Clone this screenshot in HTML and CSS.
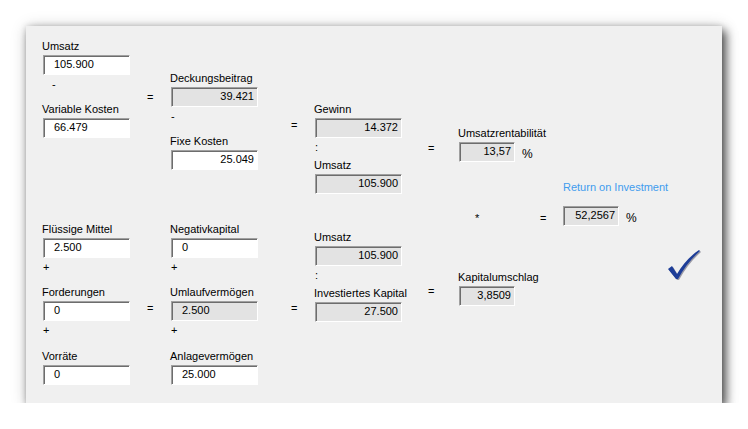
FILE: index.html
```html
<!DOCTYPE html>
<html lang="de">
<head>
<meta charset="utf-8">
<title>Return on Investment</title>
<link rel="stylesheet" href="styles.css">
</head>
<body>
<div class="panel">
  <div class="col col-a">
    <div class="field top-a"><div class="lbl">Umsatz</div><div class="box">105.900</div></div>
    <div class="sep"><span class="ind">-</span></div>
    <div class="field"><div class="lbl">Variable Kosten</div><div class="box">66.479</div></div>
    <div class="field bottom-a"><div class="lbl">Flüssige Mittel</div><div class="box">2.500</div></div>
    <div class="sep">+</div>
    <div class="field"><div class="lbl">Forderungen</div><div class="box">0</div></div>
    <div class="sep sep-wide">+</div>
    <div class="field"><div class="lbl">Vorräte</div><div class="box">0</div></div>
  </div>

  <div class="opcol op1"><div class="eq">=</div><div class="eq eq-low">=</div></div>

  <div class="col col-b">
    <div class="field top-b"><div class="lbl">Deckungsbeitrag</div><div class="box ro num">39.421</div></div>
    <div class="sep">-</div>
    <div class="field"><div class="lbl">Fixe Kosten</div><div class="box num">25.049</div></div>
    <div class="field bottom-b"><div class="lbl">Negativkapital</div><div class="box">0</div></div>
    <div class="sep">+</div>
    <div class="field"><div class="lbl">Umlaufvermögen</div><div class="box ro">2.500</div></div>
    <div class="sep sep-wide">+</div>
    <div class="field"><div class="lbl">Anlagevermögen</div><div class="box">25.000</div></div>
  </div>

  <div class="opcol op2"><div class="eq">=</div><div class="eq eq-low">=</div></div>

  <div class="col col-c">
    <div class="field top-c"><div class="lbl">Gewinn</div><div class="box ro num">14.372</div></div>
    <div class="sep sep-short">:</div>
    <div class="field"><div class="lbl">Umsatz</div><div class="box ro num">105.900</div></div>
    <div class="field bottom-c"><div class="lbl">Umsatz</div><div class="box ro num">105.900</div></div>
    <div class="sep sep-short">:</div>
    <div class="field"><div class="lbl">Investiertes Kapital</div><div class="box ro num">27.500</div></div>
  </div>

  <div class="opcol op3"><div class="eq">=</div><div class="eq eq-low">=</div></div>

  <div class="col col-d">
    <div class="field rent">
      <div class="lbl">Umsatzrentabilität</div>
      <div class="boxrow"><div class="box ro num small">13,57</div><span class="pct">%</span></div>
    </div>
    <div class="lbl roi-lbl">Return on Investment</div>
    <div class="roi-row">
      <span class="star">*</span>
      <span class="eq2">=</span>
      <div class="box ro num small">52,2567</div>
      <span class="pct">%</span>
    </div>
    <div class="field kap"><div class="lbl">Kapitalumschlag</div><div class="box ro num small">3,8509</div></div>
  </div>

  <div class="checkcol">
    <svg class="check" width="36" height="34" viewBox="0 0 36 34" aria-hidden="true">
      <path d="M2,22 L6,19 L11,27 C16,18 24,9 33,3 L34,4 C25,12 18,21 12,32 L10,32 Z" fill="#9a9aa6" transform="translate(1,1)"/>
      <path d="M2,22 L6,19 L11,27 C16,18 24,9 33,3 L34,4 C25,12 18,21 12,32 L10,32 Z" fill="#1d3d98"/>
    </svg>
  </div>
</div>
</body>
</html>
```

FILE: styles.css
```css
html, body {
  margin: 0;
  padding: 0;
  background: #ffffff;
}

body {
  font-family: "Liberation Sans", Arial, sans-serif;
  font-size: 11px;
  color: #000;
}

.panel {
  margin: 26px 0 0 26px;
  width: 696px;
  height: 377px;
  box-sizing: border-box;
  padding-left: 17px;
  background: #f0f0f0;
  display: flex;
  align-items: flex-start;
  box-shadow: 4px 5px 9px rgba(0, 0, 0, 0.62), 1px 2px 16px rgba(0, 0, 0, 0.2), 0 0 6px rgba(0, 0, 0, 0.12);
}

.col {
  display: flex;
  flex-direction: column;
  width: 87px;
  flex: none;
}

.col-d {
  width: 208px;
}

.field {
  display: flex;
  flex-direction: column;
}

.lbl {
  height: 13px;
  line-height: 13px;
  margin-bottom: 2px;
  margin-left: -1px;
  white-space: nowrap;
}

.box {
  box-sizing: border-box;
  width: 87px;
  height: 20px;
  line-height: 17px;
  padding: 0 3px 1px 10px;
  background: #ffffff;
  border: 1px solid;
  border-color: #a0a0a0 #ffffff #ffffff #a0a0a0;
  box-shadow: inset 1px 1px 0 #6d6d6d;
  white-space: nowrap;
}

.box.ro {
  background: #e3e3e3;
}

.box.num {
  text-align: right;
}

.box.small {
  width: 56px;
  flex: none;
}

.sep {
  height: 28px;
  box-sizing: border-box;
  padding-top: 3px;
  line-height: 13px;
}

.sep-wide {
  height: 29px;
}

.sep-short {
  height: 21px;
}

.ind {
  padding-left: 9px;
}

/* column vertical offsets */
.top-a { margin-top: 14px; }
.bottom-a { margin-top: 85px; }
.top-b { margin-top: 46px; }
.bottom-b { margin-top: 53px; }
.top-c { margin-top: 77px; }
.bottom-c { margin-top: 37px; }

/* operator columns */
.opcol {
  display: flex;
  flex-direction: column;
  flex: none;
  box-sizing: border-box;
}

.eq {
  line-height: 13px;
  height: 13px;
}

.op1 { width: 41px; padding-left: 17px; }
.op1 .eq { margin-top: 65px; }
.op1 .eq-low { margin-top: 198px; }

.op2 { width: 57px; padding-left: 33px; }
.op2 .eq { margin-top: 93px; }
.op2 .eq-low { margin-top: 170px; }

.op3 { width: 57px; padding-left: 26px; }
.op3 .eq { margin-top: 116px; }
.op3 .eq-low { margin-top: 130px; }

/* right-hand column */
.rent { margin-top: 101px; }

.boxrow {
  display: flex;
  align-items: flex-start;
}

.pct {
  font-size: 12px;
  line-height: 14px;
  margin-top: 5px;
  margin-left: 7px;
}

.roi-lbl {
  margin-top: 19px;
  margin-bottom: 12px;
  margin-left: 104px;
  color: #3f9cee;
}

.roi-row {
  display: flex;
  align-items: flex-start;
  height: 20px;
}

.star {
  box-sizing: border-box;
  width: 81px;
  padding-left: 16px;
  margin-top: 6px;
  line-height: 13px;
}

.eq2 {
  width: 23px;
  margin-top: 6px;
  line-height: 13px;
}

.kap { margin-top: 45px; }

.checkcol {
  flex: none;
  margin-top: 221px;
  margin-left: -1px;
}

.check {
  display: block;
}
```
